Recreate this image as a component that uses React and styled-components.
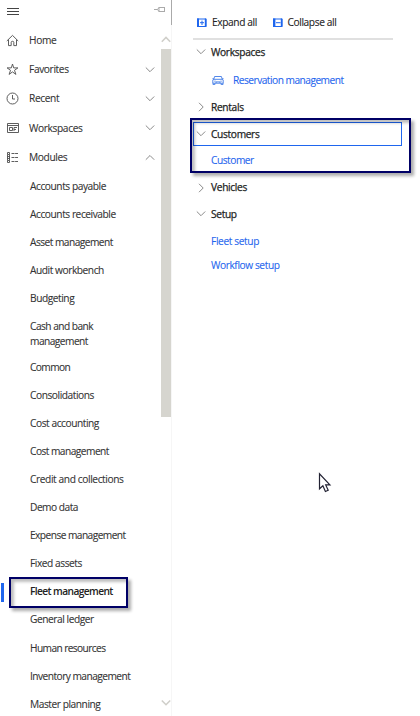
import React from "react";
import styled, { createGlobalStyle, css } from "styled-components";

const GlobalStyle = createGlobalStyle`
  * { box-sizing: border-box; }
  body { margin: 0; background: #fff; overflow: hidden; }
`;

const Page = styled.div`
  position: relative;
  display: flex;
  width: 420px;
  height: 716px;
  overflow: hidden;
  background: #fff;
  color: #333;
  font-family: "Open Sans", "Noto Sans", sans-serif;
  font-size: 10.2px;
  letter-spacing: -0.45px;
  line-height: 15px;
  white-space: nowrap;
  -webkit-text-stroke: 0.1px currentColor;
`;

const Sidebar = styled.aside`
  display: grid;
  grid-template-columns: 161px 11px;
  width: 172px;
  height: 716px;
`;

const Nav = styled.nav`
  display: flex;
  flex-direction: column;
`;

const NavHeader = styled.header`
  display: flex;
  justify-content: space-between;
  height: 25.5px;
  padding: 6px 0 0 6px;
`;

const PinSlot = styled.span`
  margin-right: -5px;
`;

const NavRow = styled.div`
  display: grid;
  grid-template-columns: 13px 1fr 10px;
  column-gap: 10px;
  align-items: center;
  flex: none;
  height: 29.4px;
  padding: 0 6px 0 6px;
  letter-spacing: -0.38px;
`;

const ModuleList = styled.ul`
  list-style: none;
  margin: 0;
  padding: 0;
`;

const ModuleItem = styled.li`
  position: relative;
  width: 140px;
  min-height: 28.1px;
  padding: 6.5px 0 0 30px;
  letter-spacing: ${(p) => p.$track ?? -0.45}px;
  ${(p) =>
    p.$tall &&
    css`
      height: 40.2px;
      white-space: pre;
    `}
  ${(p) =>
    p.$selected &&
    css`
      color: #222;
      font-weight: 600;
      -webkit-text-stroke: 0;
    `}
`;

const SelectedBar = styled.span`
  position: absolute;
  left: 1px;
  top: 5px;
  width: 2.5px;
  height: 19px;
  background: #1f66ee;
`;

const Callout = styled.span`
  position: absolute;
  left: ${(p) => p.$x}px;
  top: ${(p) => p.$y}px;
  width: ${(p) => p.$w}px;
  height: ${(p) => p.$h}px;
  border: 2px solid #000066;
  box-shadow: 3px 3px 3px rgba(0, 0, 0, 0.32), inset 3px 3px 3px rgba(0, 0, 0, 0.25);
  pointer-events: none;
`;

const ScrollRail = styled.div`
  display: flex;
  flex-direction: column;
  height: 716px;
  border-right: 1px solid #f6f6f6;
`;

const RailCap = styled.div`
  flex: none;
  height: 25px;
  margin-right: -1px;
  border-right: 1px solid #aaa;
`;

const RailButton = styled.div`
  display: flex;
  justify-content: center;
  align-items: center;
  height: ${(p) => p.$h}px;
  padding-top: ${(p) => p.$drop ?? 0}px;
`;

const Thumb = styled.div`
  height: 368px;
  background: #d6d5cf;
`;

const Spacer = styled.div`
  flex: 1;
`;

const Panel = styled.main`
  width: 248px;
  padding: 7px 0 0 21px;
  color: #222;
`;

const Toolbar = styled.div`
  display: flex;
  align-items: center;
  width: 200px;
  height: 33px;
  padding-left: 4px;
  border-bottom: 2px solid #e0e0e0;
  letter-spacing: -0.4px;
`;

const ToolButton = styled.div`
  display: grid;
  grid-template-columns: 10px auto;
  justify-content: start;
  column-gap: 5px;
  align-items: center;
  width: 75.5px;
`;

const Group = styled.section`
  position: relative;
  padding-top: ${(p) => p.$gap ?? 0}px;
`;

const GroupTitle = styled.div`
  display: grid;
  grid-template-columns: 10px auto;
  justify-content: start;
  column-gap: 5px;
  align-items: center;
  width: 209px;
  height: ${(p) => p.$h ?? 24}px;
  padding-left: ${(p) => (p.$focus ? 2 : 3)}px;
  border: ${(p) => (p.$focus ? "1px solid #1f66ee" : "0")};
  letter-spacing: -0.33px;
  -webkit-text-stroke: 0.25px currentColor;
`;

const Link = styled.a`
  display: flex;
  align-items: center;
  gap: 9px;
  height: ${(p) => p.$h}px;
  padding-left: ${(p) => p.$indent ?? 18}px;
  color: #1f66ee;
  letter-spacing: ${(p) => p.$track ?? -0.38}px;
`;

const Cursor = styled.svg`
  position: absolute;
  left: 318px;
  top: 472px;
`;

const Glyph = styled.svg`
  display: block;
  fill: none;
  stroke: ${(p) => p.$color ?? "#555"};
  stroke-width: ${(p) => p.$weight ?? 1};
`;

const Chevron = ({ dir, color = "#8a8a8a", weight }) => {
  const paths = {
    down: "M.8 2.5 5 6.7 9.2 2.5",
    up: "M.8 6.7 5 2.5l4.2 4.2",
    right: "M3 .8 7.2 5 3 9.2",
  };
  return (
    <Glyph width="10" height="10" viewBox="0 0 10 10" $color={color} $weight={weight}>
      <path d={paths[dir]} />
    </Glyph>
  );
};

const MenuIcon = () => (
  <Glyph width="13" height="12" viewBox="0 0 13 12" $color="#444">
    <path d="M1 2.5h12M1 5.5h12M1 8.5h12" />
  </Glyph>
);

const PinIcon = () => (
  <Glyph width="12" height="8" viewBox="0 0 12 8" $color="#aaa">
    <path d="M0 3.5h3.5M3.5 3.5 5 1.5h5M3.5 3.5 5 5.5h5M10.5 1v5M5 1v5" />
  </Glyph>
);

const icons = {
  home: (
    <path d="M.8 7 6.5 1.4 12.2 7M2.5 5.6v6h2.7V8.3q0-1 1.3-1t1.3 1v3.3h2.7v-6" />
  ),
  star: (
    <path d="m6.5 1 1.2 3.9h4.2L8.5 7.3l1.4 4.1-3.4-2.5-3.4 2.5 1.4-4.1-3.4-2.4h4.2z" />
  ),
  clock: (
    <>
      <circle cx="6.5" cy="6.5" r="5.5" />
      <path d="M6.5 3v4H9" />
    </>
  ),
  workspace: <path d="M1.5 1.5h11v9h-11zM1.5 3.5h11M3.5 5.5h3v3h-3zM8 9V5.5h3M8 7.5h2" />,
  modules: (
    <>
      <path d="M1.5 1.5h2v2h-2zM1.5 5.5h2v2h-2zM1.5 9.5h2v2h-2zM1.5 3.5v6M3.5 3.5v6" />
      <path d="M5.5 2.5H12M5.5 6.5H12M5.5 10.5H12" strokeDasharray="3 .6" />
    </>
  ),
};

const NavIcon = ({ name }) => (
  <Glyph width="13" height="13" viewBox="0 0 13 13" $weight={0.95}>
    {icons[name]}
  </Glyph>
);

const PanelIcon = ({ collapse }) => (
  <Glyph width="10" height="10" viewBox="0 0 10 10" $color="#1f66ee">
    <path d="M0 1h9v7.5H0" />
    <path d={collapse ? "M1.2 .5V9" : "M1 .5V9"} strokeWidth={collapse ? 2.4 : 2} />
    <path d={collapse ? "M3 4.7h4.6" : "M5 2.6v4.4M3 4.7h4"} />
    <path d="M8.6 .5V9" strokeWidth="1.6" />
  </Glyph>
);

const CarIcon = () => (
  <Glyph width="12" height="10" viewBox="0 0 12 10" $color="#3f7ae6" $weight={0.9}>
    <path d="M1.8 4.2 2.6 1.5h6.8l.8 2.7M.4 3.8h1.6M10 3.8h1.6M.8 8.2V5.1l1.2-.8h8l1.2.8v3.1zM1 8.2v1.4h1.9V8.2M9.1 8.2v1.4H11V8.2M2.3 6.2h1.4M8.3 6.2h1.4M4 8V6.9h4V8" />
  </Glyph>
);

const sections = [
  { icon: "home", label: "Home" },
  { icon: "star", label: "Favorites", dir: "down" },
  { icon: "clock", label: "Recent", dir: "down" },
  { icon: "workspace", label: "Workspaces", dir: "down" },
  { icon: "modules", label: "Modules", dir: "up" },
];

const modules = [
  { label: "Accounts payable" },
  { label: "Accounts receivable" },
  { label: "Asset management", track: -0.54 },
  { label: "Audit workbench" },
  { label: "Budgeting" },
  { label: "Cash and bank\nmanagement", tall: true, track: -0.54 },
  { label: "Common", track: -0.6 },
  { label: "Consolidations" },
  { label: "Cost accounting" },
  { label: "Cost management", track: -0.54 },
  { label: "Credit and collections", track: -0.4 },
  { label: "Demo data", track: -0.5 },
  { label: "Expense management", track: -0.56 },
  { label: "Fixed assets" },
  { label: "Fleet management", selected: true, track: -0.6 },
  { label: "General ledger" },
  { label: "Human resources", track: -0.6 },
  { label: "Inventory management", track: -0.54 },
  { label: "Master planning" },
];

export default function App() {
  return (
    <Page>
      <GlobalStyle />
      <Sidebar>
        <Nav>
          <NavHeader>
            <MenuIcon />
            <PinSlot>
              <PinIcon />
            </PinSlot>
          </NavHeader>
          {sections.map((s) => (
            <NavRow key={s.label}>
              <NavIcon name={s.icon} />
              <span>{s.label}</span>
              {s.dir && <Chevron dir={s.dir} />}
            </NavRow>
          ))}
          <ModuleList>
            {modules.map((m) => (
              <ModuleItem key={m.label} $tall={m.tall} $selected={m.selected} $track={m.track}>
                {m.label}
                {m.selected && (
                  <>
                    <SelectedBar />
                    <Callout $x={9} $y={-1} $w={119} $h={31} />
                  </>
                )}
              </ModuleItem>
            ))}
          </ModuleList>
        </Nav>
        <ScrollRail>
          <RailCap />
          <RailButton $h={24} $drop={5}>
            <Chevron dir="up" color="#d0cfca" weight={1.6} />
          </RailButton>
          <Thumb />
          <Spacer />
          <RailButton $h={28} $drop={1}>
            <Chevron dir="down" color="#d0cfca" weight={1.6} />
          </RailButton>
        </ScrollRail>
      </Sidebar>
      <Panel>
        <Toolbar>
          <ToolButton>
            <PanelIcon />
            <span>Expand all</span>
          </ToolButton>
          <ToolButton>
            <PanelIcon collapse />
            <span>Collapse all</span>
          </ToolButton>
        </Toolbar>
        <Group>
          <GroupTitle>
            <Chevron dir="down" />
            <span>Workspaces</span>
          </GroupTitle>
          <Link $h={32} $indent={19} $track={-0.52}>
            <CarIcon />
            <span>Reservation management</span>
          </Link>
        </Group>
        <Group>
          <GroupTitle $h={22}>
            <Chevron dir="right" />
            <span>Rentals</span>
          </GroupTitle>
        </Group>
        <Group $gap={4}>
          <GroupTitle $focus>
            <Chevron dir="down" />
            <span>Customers</span>
          </GroupTitle>
          <Link $h={28} $track={-0.48}>Customer</Link>
          <Callout $x={-3} $y={0} $w={221} $h={55} />
        </Group>
        <Group>
          <GroupTitle $h={27}>
            <Chevron dir="right" />
            <span>Vehicles</span>
          </GroupTitle>
        </Group>
        <Group>
          <GroupTitle $h={26}>
            <Chevron dir="down" />
            <span>Setup</span>
          </GroupTitle>
          <Link $h={28}>Fleet setup</Link>
          <Link $h={20} $track={-0.42}>Workflow setup</Link>
        </Group>
      </Panel>
      <Cursor width="14" height="21" viewBox="0 0 14 21">
        <path
          d="M1.5 1.8v15l3.4-3 2.5 5.7 2.8-1.2-2.5-5.4h4.2z"
          fill="#fff"
          stroke="#222233"
          strokeWidth="1.2"
        />
      </Cursor>
    </Page>
  );
}
